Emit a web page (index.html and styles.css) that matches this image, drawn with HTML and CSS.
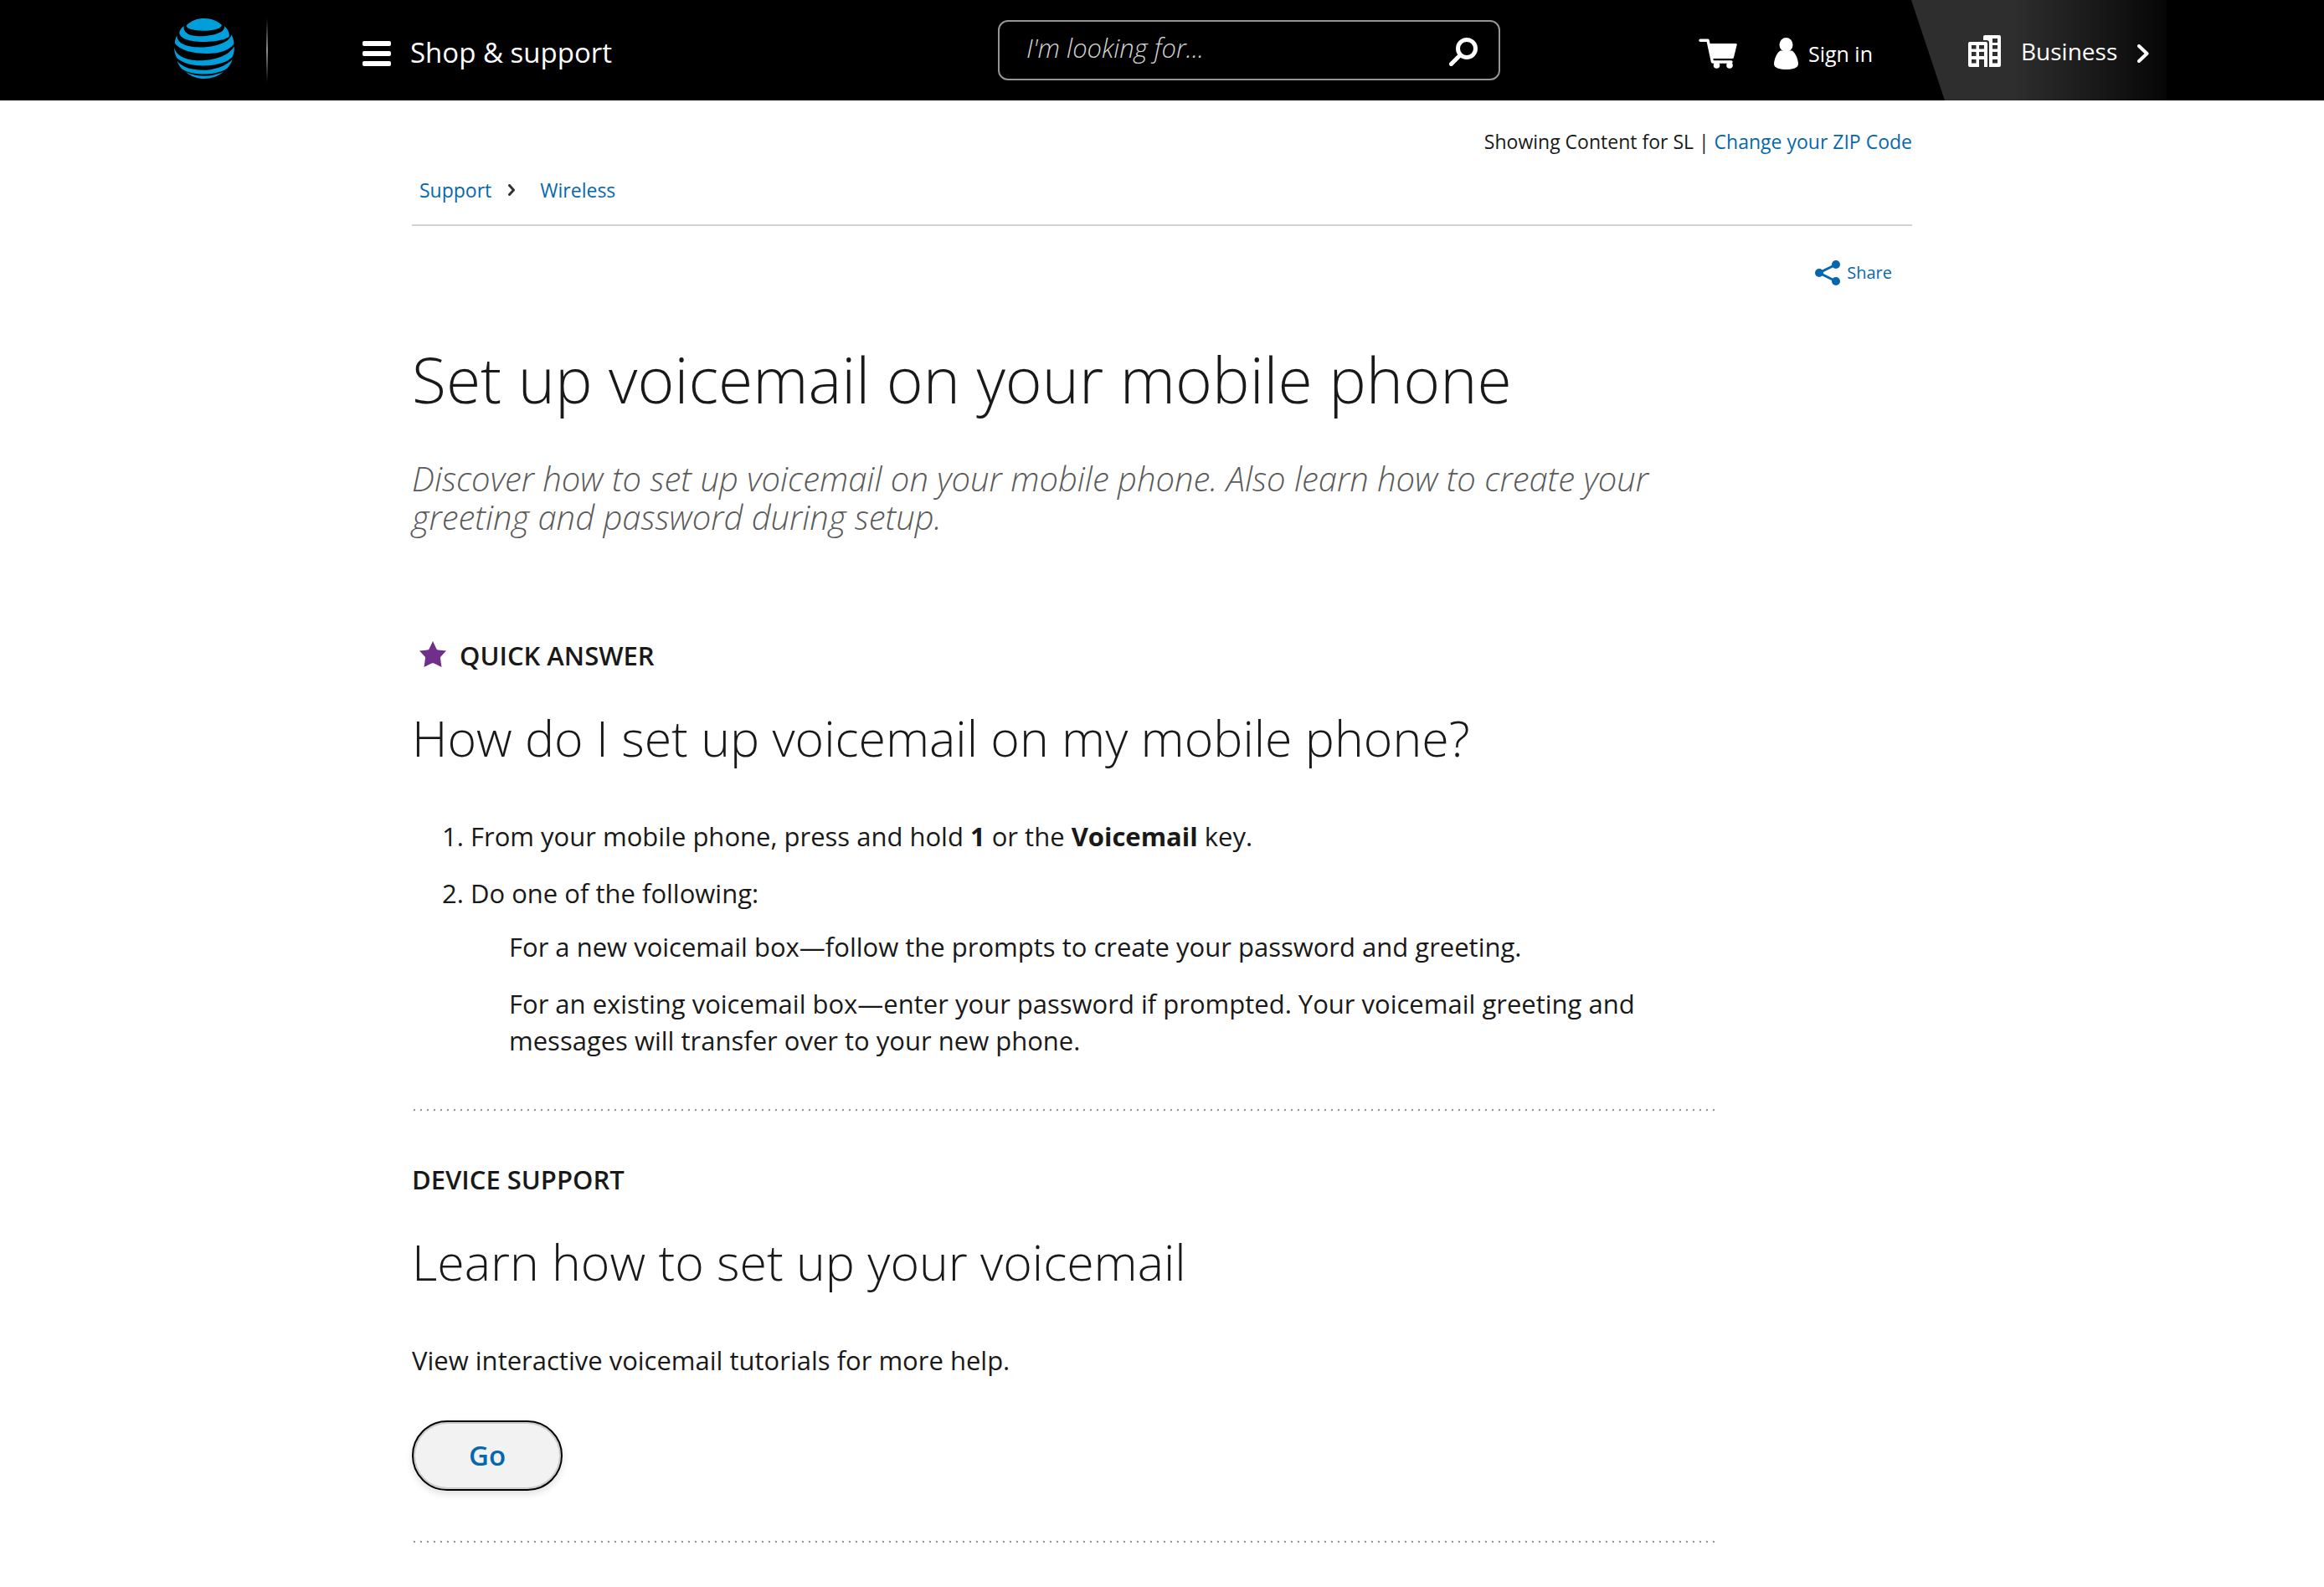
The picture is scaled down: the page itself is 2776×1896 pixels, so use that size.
FILE: index.html
```
<!DOCTYPE html>
<html lang="en">
<head>
<meta charset="utf-8">
<meta name="viewport" content="width=device-width, initial-scale=1">
<title>Set up voicemail on your mobile phone</title>
<link rel="stylesheet" href="styles.css">
</head>
<body>
<header class="site-header">
  <div class="header-inner">
    <div class="brand-area">
      <a class="logo" href="#" aria-label="Home">
        <svg width="72" height="72" viewBox="0 0 72 72" fill="#009fdb" aria-hidden="true">
          <path d="M14.5 8.5C20 2.5 28 0 36 0C45 0 52 3 57 8C56 12.500 46 14.700 35 14.700C24 14.700 15 12.500 14.500 8.500Z"/>
          <path d="M11.500 9C8 12 6 15 6.300 17.500C7 24 19 28 34 28C50 28 62 25 65.500 22C67 18 64 13 60 9C62 17 46 21.300 30 21.300C18 21.300 11 17.500 11.500 9Z"/>
          <path d="M3.500 20C1.500 24 .8 27 1 30C7 38 22 42 40 42C54 42 66 38 71 31C71.500 27 70.500 23 68.500 19.500C66 29 48 34.500 31 34.500C14 34.500 2.500 29 3.500 20Z"/>
          <path d="M.2 34.500C0 39 1 43 3 47C10 53 20 56.500 34 56.500C49 56.500 63 53 69.500 46C71.500 42 72 38 71.800 33.500C65 45 47 50.300 30 50.300C15 50.300 2 45 .2 34.500Z"/>
          <path d="M3.500 51C5 55 7 58 9.500 60.500C16 64.500 25 66.500 36 66.500C48 66.500 57 64 63.500 59.500C66 56.500 68.500 53 69.500 49C61 57.500 48 61.700 34 61.700C21 61.700 10 58.500 3.500 51Z"/>
          <path d="M14 64C20 69.500 28 72 36 72C45 72 53 69 59.500 63.500C52 67 44 68.800 36 68.800C28 68.800 20 67 14 64Z"/>
        </svg>
      </a>
      <span class="divider"></span>
      <button class="menu-button" type="button">
        <svg width="34" height="30" viewBox="0 0 34 30" fill="#fff" aria-hidden="true"><rect width="34" height="6" rx="2"/><rect y="12" width="34" height="6" rx="2"/><rect y="24" width="34" height="6" rx="2"/></svg>
        <span>Shop &amp; support</span>
      </button>
    </div>
    <form class="search" role="search">
      <input class="search-input" type="text" placeholder="I'm looking for..." aria-label="Search">
      <button class="search-button" type="button" aria-label="Submit search">
        <svg width="34" height="34" viewBox="0 0 34 34" fill="none" stroke="#fff" aria-hidden="true"><circle cx="21" cy="13" r="10.500" stroke-width="5"/><path d="M12.500 21.500L2.500 31.500" stroke-width="5" stroke-linecap="round"/></svg>
      </button>
    </form>
    <nav class="account" aria-label="Account">
      <a class="cart" href="#" aria-label="Cart">
        <svg width="46" height="36" viewBox="0 0 46 36" aria-hidden="true"><path d="M2 2.200H11L16.500 28H39" fill="none" stroke="#fff" stroke-width="3.400" stroke-linecap="round" stroke-linejoin="round"/><path d="M12.500 6H44.500Q46 6 45.700 7.500L42 22.500Q41.600 24 40 24H16.500Z" fill="#fff"/><circle cx="21.500" cy="32" r="3.800" fill="#fff"/><circle cx="37" cy="32" r="3.800" fill="#fff"/></svg>
      </a>
      <a class="sign-in" href="#">
        <svg width="29" height="38" viewBox="0 0 29 38" fill="#fff" aria-hidden="true"><ellipse cx="14.500" cy="8.500" rx="8" ry="8.500"/><path d="M7.500 15.500H21.500C26 18 29 27 29 31.500C29 36.500 21 38 14.500 38C8 38 0 36.500 0 31.500C0 27 3 18 7.500 15.500Z"/></svg>
        <span>Sign in</span>
      </a>
    </nav>
    <a class="business" href="#">
      <svg width="39" height="38" viewBox="0 0 39 38" fill="#fff" fill-rule="evenodd" aria-hidden="true"><path d="M2 8H21Q23 8 23 10V38H19V29H13V38H2Q0 38 0 36V10Q0 8 2 8ZM4 12V16.500H9.500V12ZM13 12V16.500H19V12ZM4 20V25H9.500V20ZM13 20V25H19V20ZM4 29V33.500H9.500V29Z"/><path d="M18 6V2Q18 0 20 0H37Q39 0 39 2V36Q39 38 37 38H25V9Q25 6 22 6ZM29 4V9H35V4ZM29 12V16.500H35V12ZM29 20V25H35V20ZM29 29V33.500H35V29Z"/></svg>
      <span>Business</span>
      <svg class="business-chevron" width="14" height="22" viewBox="0 0 14 22" fill="none" stroke="#fff" stroke-width="4" stroke-linecap="round" stroke-linejoin="round" aria-hidden="true"><path d="M2 2L11.500 11L2 20"/></svg>
    </a>
  </div>
</header>

<main class="page">
  <p class="zip-line">Showing Content for SL | <a href="#">Change your ZIP Code</a></p>
  <nav class="breadcrumb" aria-label="Breadcrumb">
    <a href="#">Support</a>
    <svg width="8" height="14" viewBox="0 0 8 14" fill="none" stroke="#333" stroke-width="3" stroke-linecap="round" stroke-linejoin="round" aria-hidden="true"><path d="M1.500 1.500L6.500 7L1.500 12.500"/></svg>
    <a href="#">Wireless</a>
  </nav>
  <div class="share-row">
    <a class="share" href="#">
      <svg width="30" height="30" viewBox="0 0 30 30" fill="#0568ae" aria-hidden="true"><path d="M25 5L5 15L25 25" fill="none" stroke="#0568ae" stroke-width="3"/><circle cx="25" cy="5" r="5"/><circle cx="5" cy="15" r="5"/><circle cx="25" cy="25" r="5"/></svg>
      <span>Share</span>
    </a>
  </div>

  <article class="article">
    <h1>Set up voicemail on your mobile phone</h1>
    <p class="summary">Discover how to set up voicemail on your mobile phone. Also learn how to create your greeting and password during setup.</p>

    <section class="block">
      <p class="label">
        <svg width="32" height="31" viewBox="0 0 32 31" fill="#702f8a" aria-hidden="true"><path d="M16 0L20.500 9.500Q21 10.500 22.200 10.600L32 11.500L25.500 18.500Q24.800 19.300 25 20.500L26.500 31L17.500 26.500Q16 25.800 14.500 26.500L5.500 31L7 20.500Q7.200 19.300 6.500 18.500L0 11.500L9.800 10.600Q11 10.500 11.500 9.500Z"/></svg>
        <span>QUICK ANSWER</span>
      </p>
      <h2>How do I set up voicemail on my mobile phone?</h2>
      <ol class="steps">
        <li>From your mobile phone, press and hold <b>1</b> or the <b>Voicemail</b> key.</li>
        <li>Do one of the following:
          <ul class="options">
            <li>For a new voicemail box—follow the prompts to create your password and greeting.</li>
            <li>For an existing voicemail box—enter your password if prompted. Your voicemail greeting and messages will transfer over to your new phone.</li>
          </ul>
        </li>
      </ol>
    </section>

    <section class="block">
      <p class="label">DEVICE SUPPORT</p>
      <h2>Learn how to set up your voicemail</h2>
      <p class="text">View interactive voicemail tutorials for more help.</p>
      <button class="go-button" type="button">Go</button>
    </section>
  </article>
</main>
</body>
</html>
```
FILE: styles.css
```
* {
  box-sizing: border-box;
}

body {
  margin: 0;
  background: #fff;
  color: #191919;
  font-family: "Open Sans", "Noto Sans", sans-serif;
  font-size: 31px;
  line-height: 44px;
}

h1, h2, p, ol, ul {
  margin: 0;
}

a {
  color: #0568ae;
  text-decoration: none;
}

svg {
  display: block;
  flex: none;
}

button {
  font: inherit;
  cursor: pointer;
}

/* Header */
.site-header {
  background: #000;
  color: #fff;
}

.header-inner {
  display: grid;
  grid-template-columns: 1004fr 600fr 491fr 305fr;
  align-items: center;
  max-width: 2400px;
  min-height: 120px;
  margin: 0 auto;
}

.brand-area {
  display: flex;
  align-items: center;
  padding-left: 20px;
}

.logo {
  padding-bottom: 4px;
}

.divider {
  width: 2px;
  height: 76px;
  margin: 0 113px 0 38px;
  background: linear-gradient(transparent, #8c8c8c, transparent);
}

.menu-button {
  display: flex;
  align-items: center;
  gap: 23px;
  padding: 8px 0 0;
  border: 0;
  background: none;
  color: #fff;
  font-size: 33px;
}

.menu-button span {
  padding-bottom: 2px;
}

.search {
  display: flex;
  align-items: center;
  height: 72px;
  border: 2px solid #959595;
  border-radius: 12px;
}

.search-input {
  flex: 1;
  min-width: 0;
  padding: 0 0 6px 32px;
  border: 0;
  outline: 0;
  background: none;
  color: #fff;
  font: italic 300 31px/44px "Open Sans", "Noto Sans", sans-serif;
}

.search-input::placeholder {
  color: #d2d2d2;
  opacity: 1;
}

.search-button {
  padding: 4px 25px 0;
  border: 0;
  background: none;
}

.account {
  display: flex;
  justify-content: flex-end;
  align-items: center;
  gap: 44px;
  padding: 7px 46px 0 0;
}

.sign-in {
  display: flex;
  align-items: center;
  gap: 12px;
  color: #fff;
  font-size: 25px;
}

.business {
  display: flex;
  align-self: stretch;
  align-items: center;
  gap: 24px;
  padding: 2px 0 0 68px;
  background: linear-gradient(90deg, #2e2e2e 40%, #060606);
  clip-path: polygon(0 0, 40px 100%, 100% 100%, 100% 0);
  color: #fff;
  font-size: 28px;
}

.business-chevron {
  margin-top: 6px;
}

/* Page */
.page {
  max-width: 1792px;
  margin: 0 auto;
  padding: 33px 0 54px;
}

.zip-line {
  font-size: 23px;
  line-height: 32px;
  text-align: right;
}

.breadcrumb {
  display: flex;
  align-items: center;
  padding: 26px 9px 25px;
  border-bottom: 2px solid #d2d2d2;
  font-size: 23px;
  line-height: 32px;
}

.breadcrumb svg {
  margin: 0 30px 0 20px;
}

.share-row {
  display: flex;
  justify-content: flex-end;
  padding: 40px 24px 67px;
}

.share {
  display: flex;
  align-items: center;
  gap: 8px;
  font-size: 20px;
  line-height: 32px;
}

.article {
  width: 87%;
}

h1 {
  font-size: 75px;
  font-weight: 300;
  line-height: 88px;
}

.summary {
  margin: 52px 0 60px;
  color: #5a5a5a;
  font-size: 40px;
  font-style: italic;
  font-weight: 300;
  line-height: 46px;
}

.block {
  padding: 60px 0 62px;
  background: repeating-linear-gradient(90deg, transparent 0 2px, #959595 2px 4px, transparent 4px 8px) bottom / 100% 2px no-repeat;
}

.label {
  display: flex;
  align-items: center;
  gap: 16px;
  font-weight: 600;
}

.label svg {
  margin: 0 0 4px 9px;
}

h2 {
  margin: 40px 0 60px;
  font-size: 59px;
  font-weight: 300;
  line-height: 72px;
}

.steps {
  padding-left: 70px;
}

.steps li + li {
  margin-top: 24px;
}

.options {
  margin-top: 20px;
  padding-left: 46px;
  list-style: none;
}

.go-button {
  min-width: 180px;
  height: 84px;
  margin-top: 50px;
  border: 2px solid #000;
  border-radius: 42px;
  background: #f2f2f2;
  box-shadow: inset 0 0 0 2px #ccc, 0 4px 8px rgba(0, 0, 0, 0.12);
  color: #0568ae;
  font-size: 33px;
  font-weight: 600;
}
```
